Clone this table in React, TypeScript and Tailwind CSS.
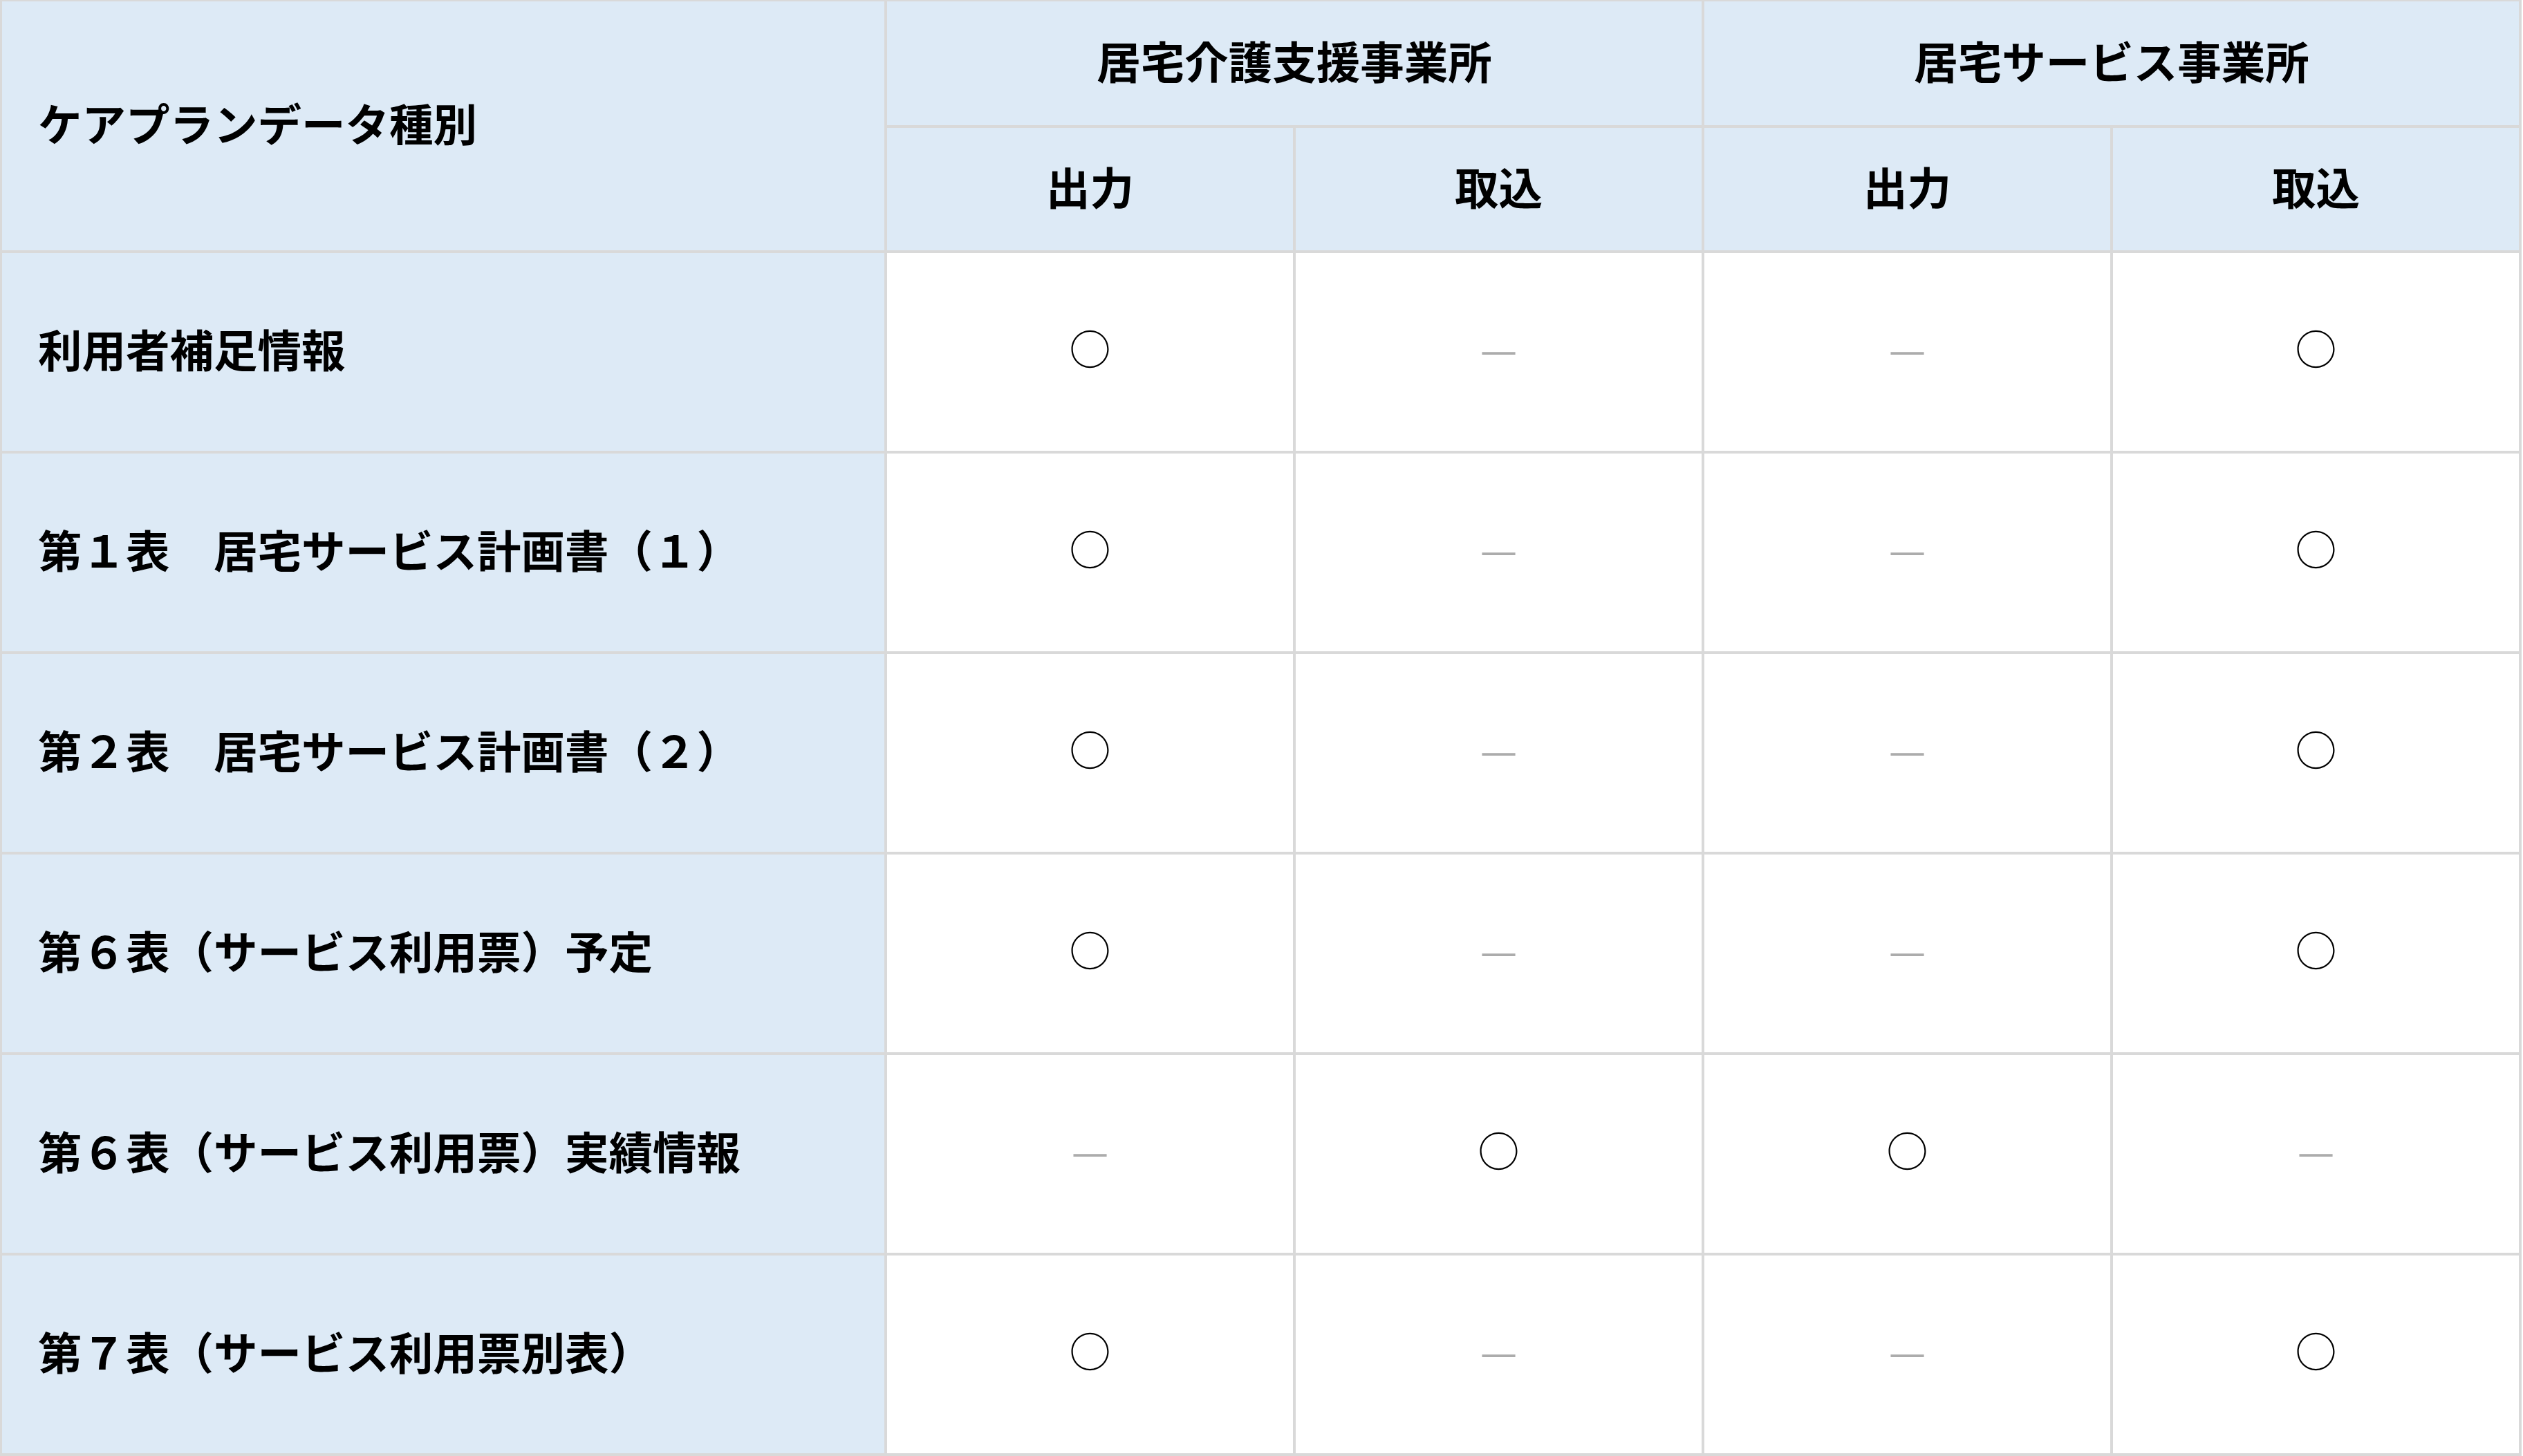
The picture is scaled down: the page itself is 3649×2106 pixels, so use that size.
import React from "react";

type Mark = "o" | "-";

const rows: { label: string; marks: Mark[] }[] = [
  { label: "利用者補足情報", marks: ["o", "-", "-", "o"] },
  { label: "第１表　居宅サービス計画書（１）", marks: ["o", "-", "-", "o"] },
  { label: "第２表　居宅サービス計画書（２）", marks: ["o", "-", "-", "o"] },
  { label: "第６表（サービス利用票）予定", marks: ["o", "-", "-", "o"] },
  { label: "第６表（サービス利用票）実績情報", marks: ["-", "o", "o", "-"] },
  { label: "第７表（サービス利用票別表）", marks: ["o", "-", "-", "o"] },
];

function MarkCell({ m }: { m: Mark }) {
  return (
    <td className="border-[4px] border-[#d9d9d9] bg-white text-center align-middle pb-[14px]">
      {m === "o" ? (
        <span className="inline-block text-[60px] leading-none font-normal text-black">○</span>
      ) : (
        <span className="inline-block text-[60px] leading-none font-normal text-[#acacac]">—</span>
      )}
    </td>
  );
}

const th =
  "border-[4px] border-[#d9d9d9] bg-[#ddeaf6] text-center align-middle text-[63.5px] font-bold pb-[10px]";

export default function App() {
  return (
    <div
      className="w-[3649px] h-[2106px] bg-white overflow-hidden"
      style={{ fontFamily: '"Noto Sans CJK JP", "Noto Sans", sans-serif' }}
    >
      <div className="-mt-[2px] -ml-[1px]">
        <table className="w-[3647px] table-fixed border-collapse text-black">
          <colgroup>
            <col className="w-[1280px]" />
            <col className="w-[591px]" />
            <col className="w-[591px]" />
            <col className="w-[591px]" />
            <col className="w-[591px]" />
          </colgroup>
          <thead>
            <tr className="h-[183px]">
              <th
                rowSpan={2}
                className="border-[4px] border-[#d9d9d9] bg-[#ddeaf6] text-left align-middle pl-[52px] text-[63.5px] font-bold pb-[10px]"
              >
                ケアプランデータ種別
              </th>
              <th colSpan={2} className={th}>
                居宅介護支援事業所
              </th>
              <th colSpan={2} className={th}>
                居宅サービス事業所
              </th>
            </tr>
            <tr className="h-[181px]">
              <th className={th}>出力</th>
              <th className={th}>取込</th>
              <th className={th}>出力</th>
              <th className={th}>取込</th>
            </tr>
          </thead>
          <tbody>
            {rows.map((r) => (
              <tr key={r.label} className="h-[290px]">
                <td className="border-[4px] border-[#d9d9d9] bg-[#ddeaf6] text-left align-middle pl-[52px] pb-[10px] text-[63.5px] font-bold whitespace-nowrap">
                  {r.label}
                </td>
                {r.marks.map((m, i) => (
                  <MarkCell key={i} m={m} />
                ))}
              </tr>
            ))}
          </tbody>
        </table>
      </div>
    </div>
  );
}
